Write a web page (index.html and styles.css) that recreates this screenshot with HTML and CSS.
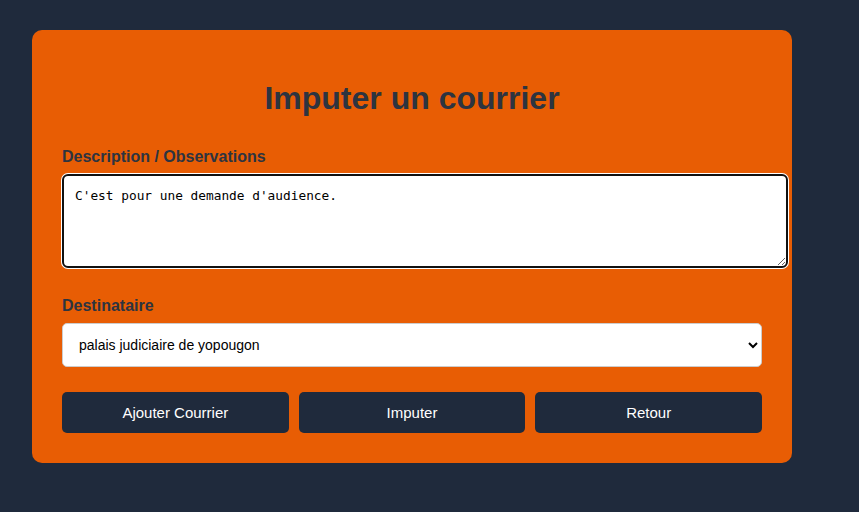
FILE: index.html
```html
<!DOCTYPE html>
<html lang="fr">
<head>
<meta charset="utf-8">
<title>Imputer un courrier</title>
<link rel="stylesheet" href="styles.css">
</head>
<body>
<div class="page">
  <form class="card">
    <h2 class="title">Imputer un courrier</h2>
    <label class="label" for="desc">Description / Observations</label>
    <textarea id="desc" class="textarea">C'est pour une demande d'audience.</textarea>
    <label class="label label-dest" for="dest">Destinataire</label>
    <select id="dest" class="select">
      <option>palais judiciaire de yopougon</option>
    </select>
    <div class="actions">
      <button type="button" class="btn">Ajouter Courrier</button>
      <button type="button" class="btn">Imputer</button>
      <button type="button" class="btn">Retour</button>
    </div>
  </form>
</div>
</body>
</html>
```
FILE: styles.css
```css
html, body {
  margin: 0;
  padding: 0;
  background: #1f2a3c;
  font-family: "Liberation Sans", Arial, sans-serif;
}
.page {
  padding: 30px 32px;
}
.card {
  width: 700px;
  background: #e85d04;
  border-radius: 10px;
  padding: 30px;
  display: flex;
  flex-direction: column;
}
.title {
  margin: 20px 0 31px;
  text-align: center;
  font-size: 32px;
  font-weight: bold;
  line-height: 37px;
  color: #2d3440;
}
.label {
  display: block;
  font-size: 16px;
  font-weight: bold;
  line-height: 18px;
  color: #2d3440;
  margin-bottom: 8px;
}
.label-dest {
  margin-top: 0;
}
.textarea {
  box-sizing: content-box;
  width: 100%;
  height: 67px;
  padding: 12px 11px 11px;
  border: 2px solid #111;
  border-radius: 6px;
  box-shadow: 0 0 0 1px #fff;
  outline: none;
  background: #fff;
  font-family: "DejaVu Sans Mono", "Liberation Mono", monospace;
  font-size: 12.8px;
  line-height: 15px;
  color: #000;
  margin: 0 0 29px;
  resize: vertical;
}
.select {
  width: 100%;
  height: 44px;
  padding: 0 12px;
  border: 1px solid #ccc;
  border-radius: 5px;
  background: #fff;
  font-family: "Liberation Sans", Arial, sans-serif;
  font-size: 14px;
  color: #000;
  margin: 0 0 25px;
}
.actions {
  display: flex;
  gap: 10px;
}
.btn {
  flex: 1;
  height: 41px;
  border: none;
  border-radius: 5px;
  background: #1f2a3c;
  color: #fff;
  font-family: "Liberation Sans", Arial, sans-serif;
  font-size: 15px;
  cursor: pointer;
}
```
